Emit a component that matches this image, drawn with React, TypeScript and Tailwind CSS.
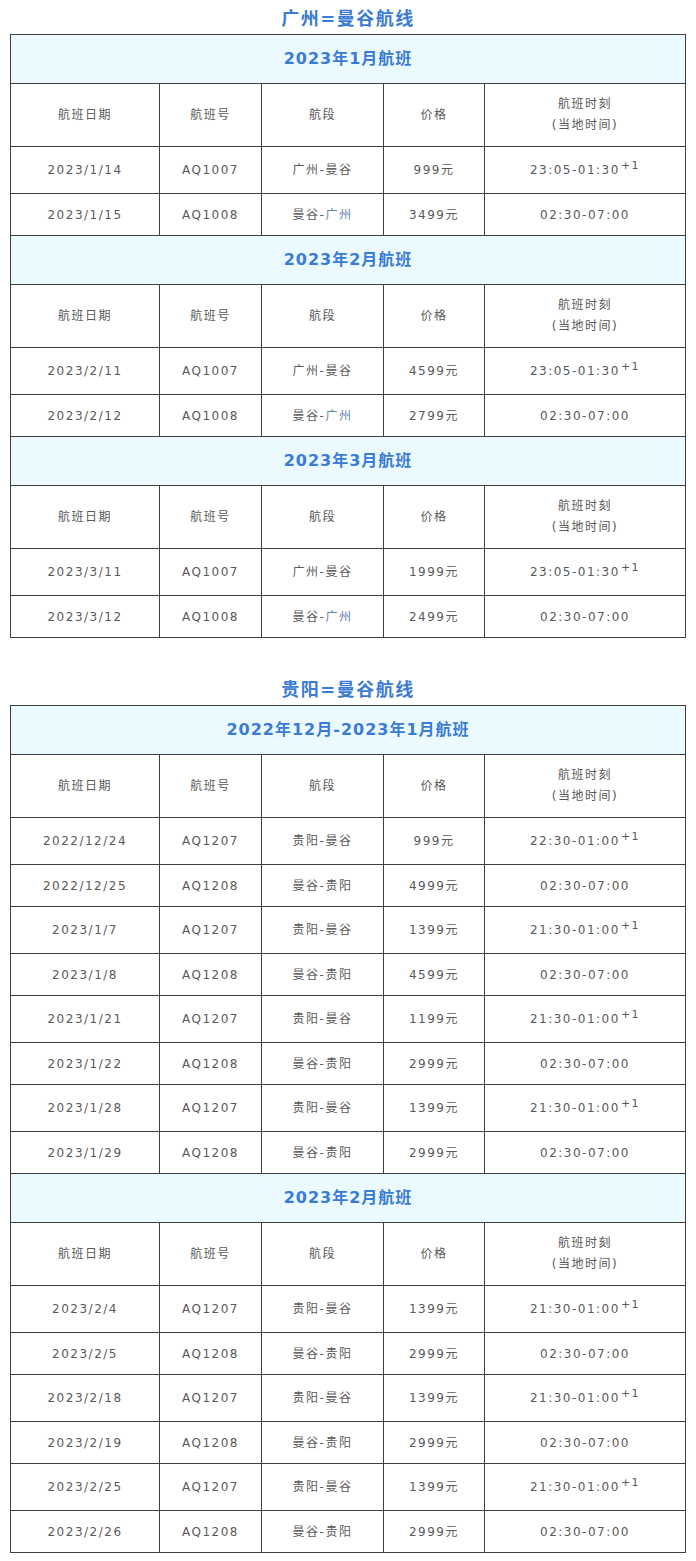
import React from 'react';

type Flight = {
  date: string;
  no: string;
  from: string;
  to: string;
  price: string;
  time: string;
  nextDay?: boolean;
};

type MonthBlock = {
  title: string;
  flights: Flight[];
};

const cantonRoute: MonthBlock[] = [
  {
    title: '2023年1月航班',
    flights: [
      { date: '2023/1/14', no: 'AQ1007', from: '广州', to: '曼谷', price: '999元', time: '23:05-01:30', nextDay: true },
      { date: '2023/1/15', no: 'AQ1008', from: '曼谷', to: '广州', price: '3499元', time: '02:30-07:00' },
    ],
  },
  {
    title: '2023年2月航班',
    flights: [
      { date: '2023/2/11', no: 'AQ1007', from: '广州', to: '曼谷', price: '4599元', time: '23:05-01:30', nextDay: true },
      { date: '2023/2/12', no: 'AQ1008', from: '曼谷', to: '广州', price: '2799元', time: '02:30-07:00' },
    ],
  },
  {
    title: '2023年3月航班',
    flights: [
      { date: '2023/3/11', no: 'AQ1007', from: '广州', to: '曼谷', price: '1999元', time: '23:05-01:30', nextDay: true },
      { date: '2023/3/12', no: 'AQ1008', from: '曼谷', to: '广州', price: '2499元', time: '02:30-07:00' },
    ],
  },
];

const guiyangRoute: MonthBlock[] = [
  {
    title: '2022年12月-2023年1月航班',
    flights: [
      { date: '2022/12/24', no: 'AQ1207', from: '贵阳', to: '曼谷', price: '999元', time: '22:30-01:00', nextDay: true },
      { date: '2022/12/25', no: 'AQ1208', from: '曼谷', to: '贵阳', price: '4999元', time: '02:30-07:00' },
      { date: '2023/1/7', no: 'AQ1207', from: '贵阳', to: '曼谷', price: '1399元', time: '21:30-01:00', nextDay: true },
      { date: '2023/1/8', no: 'AQ1208', from: '曼谷', to: '贵阳', price: '4599元', time: '02:30-07:00' },
      { date: '2023/1/21', no: 'AQ1207', from: '贵阳', to: '曼谷', price: '1199元', time: '21:30-01:00', nextDay: true },
      { date: '2023/1/22', no: 'AQ1208', from: '曼谷', to: '贵阳', price: '2999元', time: '02:30-07:00' },
      { date: '2023/1/28', no: 'AQ1207', from: '贵阳', to: '曼谷', price: '1399元', time: '21:30-01:00', nextDay: true },
      { date: '2023/1/29', no: 'AQ1208', from: '曼谷', to: '贵阳', price: '2999元', time: '02:30-07:00' },
    ],
  },
  {
    title: '2023年2月航班',
    flights: [
      { date: '2023/2/4', no: 'AQ1207', from: '贵阳', to: '曼谷', price: '1399元', time: '21:30-01:00', nextDay: true },
      { date: '2023/2/5', no: 'AQ1208', from: '曼谷', to: '贵阳', price: '2999元', time: '02:30-07:00' },
      { date: '2023/2/18', no: 'AQ1207', from: '贵阳', to: '曼谷', price: '1399元', time: '21:30-01:00', nextDay: true },
      { date: '2023/2/19', no: 'AQ1208', from: '曼谷', to: '贵阳', price: '2999元', time: '02:30-07:00' },
      { date: '2023/2/25', no: 'AQ1207', from: '贵阳', to: '曼谷', price: '1399元', time: '21:30-01:00', nextDay: true },
      { date: '2023/2/26', no: 'AQ1208', from: '曼谷', to: '贵阳', price: '2999元', time: '02:30-07:00' },
    ],
  },
];

const cell = 'border border-[#3f3f3f] text-center align-middle p-0';

function RouteTable({ name, months }: { name: string; months: MonthBlock[] }) {
  return (
    <section>
      <h2 className="h-[34px] flex items-center justify-center pt-[2px] text-[18px] font-bold tracking-[1.5px] text-[#3a7bd5]">
        {name}
      </h2>
      <table className="w-full table-fixed border-collapse">
        <colgroup>
          <col className="w-[149px]" />
          <col className="w-[102px]" />
          <col className="w-[122px]" />
          <col className="w-[101px]" />
          <col />
        </colgroup>
        <tbody>
          {months.map((m) => (
            <React.Fragment key={m.title}>
              {/* month banner */}
              <tr className="h-[49px] bg-[#ebfaff]">
                <td colSpan={5} className={`${cell} text-[16px] font-bold tracking-[1px] text-[#3a7bd5]`}>
                  {m.title}
                </td>
              </tr>
              <tr className="h-[63px]">
                <td className={cell}>航班日期</td>
                <td className={cell}>航班号</td>
                <td className={cell}>航段</td>
                <td className={cell}>价格</td>
                <td className={`${cell} leading-[21px]`}>
                  航班时刻
                  <br />
                  (当地时间)
                </td>
              </tr>
              {m.flights.map((f) => (
                <tr key={f.date} className={f.nextDay ? 'h-[47px]' : 'h-[42px]'}>
                  <td className={cell}>{f.date}</td>
                  <td className={cell}>{f.no}</td>
                  <td className={cell}>
                    {f.from}-
                    <span className={f.to === '广州' ? 'text-[#5f82ab]' : ''}>{f.to}</span>
                  </td>
                  <td className={cell}>{f.price}</td>
                  <td className={cell}>
                    {f.time}
                    {f.nextDay && <sup className="text-[11px] ml-[1px]">+1</sup>}
                  </td>
                </tr>
              ))}
            </React.Fragment>
          ))}
        </tbody>
      </table>
    </section>
  );
}

export default function App() {
  return (
    <div
      className="w-[696px] min-h-[1561px] bg-white px-[10px] text-[12px] tracking-[1.5px] text-[#595959]"
      style={{ fontFamily: '"DejaVu Sans", "Noto Sans CJK SC", sans-serif' }}
    >
      <RouteTable name="广州=曼谷航线" months={cantonRoute} />
      <div className="mt-[33px]">
        <RouteTable name="贵阳=曼谷航线" months={guiyangRoute} />
      </div>
    </div>
  );
}
